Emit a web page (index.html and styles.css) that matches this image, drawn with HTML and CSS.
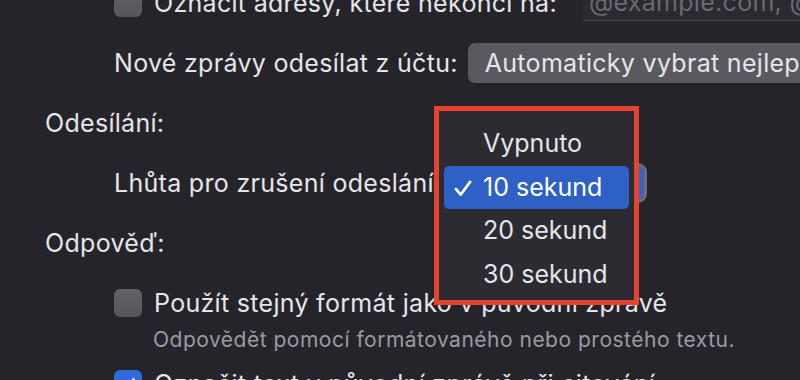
FILE: index.html
```html
<!DOCTYPE html>
<html lang="cs">
<head>
   <meta charset="UTF-8">
   <meta name="viewport" content="width=device-width, initial-scale=1.0">
   <title>Mail - Předvolby</title>
   <link rel="stylesheet" href="styles.css">
</head>
<body>
   <div class="prefs">
       <div class="pref-row indent">
           <span class="checkbox"></span>
           <span class="pref-label">Označit adresy, které nekončí na:</span>
           <div class="text-field">@example.com, @example.org</div>
       </div>

       <div class="pref-row indent">
           <span class="pref-label">Nové zprávy odesílat z účtu:</span>
           <div class="popup">Automaticky vybrat nejlepší účet</div>
       </div>

       <div class="pref-row section">Odesílání:</div>

       <div class="pref-row indent">
           <span class="pref-label">Lhůta pro zrušení odeslání:</span>
           <div class="popup popup-active">10 sekund</div>
       </div>

       <div class="pref-row section">Odpověď:</div>

       <div class="pref-row indent has-hint">
           <span class="checkbox"></span>
           <span class="pref-label">Použít stejný formát jako v původní zprávě</span>
       </div>
       <div class="pref-hint">Odpovědět pomocí formátovaného nebo prostého textu.</div>

       <div class="pref-row indent last">
           <span class="checkbox checked">
               <svg viewBox="0 0 20 20"><polyline points="4.5,10.5 8.5,14.5 15.5,5.5"/></svg>
           </span>
           <span class="pref-label">Označit text v původní zprávě při citování</span>
       </div>
   </div>

   <!-- otevřené menu, zvýrazněné červeným rámečkem -->
   <div class="callout">
       <ul class="menu">
           <li class="menu-item">Vypnuto</li>
           <li class="menu-item selected">
               <svg class="menu-check" viewBox="0 0 20 20"><polyline points="2.5,10.5 7.5,16.5 17.5,3"/></svg>
               10 sekund
           </li>
           <li class="menu-item">20 sekund</li>
           <li class="menu-item">30 sekund</li>
       </ul>
   </div>
</body>
</html>
```

FILE: styles.css
```css
:root {
    --window-bg: #26242b;
    --menu-bg: #2d2b32;
    --text: #e6e5e8;
    --text-muted: #9c9aa0;
    --placeholder: #6b6970;
    --control: #5b5960;
    --checkbox: #5c5a61;
    --accent: #2f60c6;
    --callout: #e3432f;
}

* {
    margin: 0;
    padding: 0;
    box-sizing: border-box;
}

body {
    width: 800px;
    height: 380px;
    overflow: hidden;
    position: relative;
    background: var(--window-bg);
    color: var(--text);
    font-family: 'Inter', 'Noto Sans', sans-serif;
    font-size: 25px;
    line-height: 30px;
}

.prefs {
    margin-top: -12px;
    padding-left: 45px;
    letter-spacing: 0.3px;
}

.pref-row {
    display: flex;
    align-items: center;
    height: 30px;
    margin-bottom: 30px;
    white-space: nowrap;
}

.pref-row.indent {
    padding-left: 69px;
}

.pref-row.has-hint,
.pref-row.last {
    margin-bottom: 0;
}

.checkbox {
    flex: none;
    width: 28px;
    height: 28px;
    margin-right: 12px;
    border-radius: 6px;
    background: linear-gradient(#646268, #57555c);
    display: flex;
    align-items: center;
    justify-content: center;
}

.checkbox.checked {
    background: #2f6ad8;
}

.checkbox svg {
    width: 20px;
    height: 20px;
    fill: none;
    stroke: #fff;
    stroke-width: 2.6;
    stroke-linecap: round;
    stroke-linejoin: round;
}

.text-field {
    flex: none;
    margin-left: 26px;
    height: 34px;
    margin-top: 1px;
    padding: 0 6px;
    width: 260px;
    overflow: hidden;
    background: #2c2a31;
    border-bottom: 1px solid #46444b;
    color: var(--placeholder);
    line-height: 30px;
}

.popup {
    flex: none;
    margin-left: 10px;
    height: 40px;
    padding: 0 17px;
    border-radius: 7px;
    background: var(--control);
    line-height: 40px;
}

.popup-active {
    margin-left: 6px;
    width: 200px;
    background: #3762c0;
    border: 3px solid #6f6d73;
    border-radius: 9px;
    line-height: 34px;
}

.pref-hint {
    margin: 9px 0 16px 108px;
    font-size: 21px;
    line-height: 26px;
    letter-spacing: 0.5px;
    color: var(--text-muted);
}

.callout {
    position: absolute;
    left: 434px;
    top: 106px;
    width: 205px;
    height: 199px;
    border: 5px solid var(--callout);
}

.menu {
    list-style: none;
    height: 100%;
    padding: 11px 5px;
    background: var(--menu-bg);
}

.menu-item {
    position: relative;
    height: 43.5px;
    line-height: 43.5px;
    padding-left: 39px;
    border-radius: 5px;
}

.menu-item.selected {
    background: var(--accent);
    color: #fff;
}

.menu-check {
    position: absolute;
    left: 9px;
    top: 13px;
    width: 20px;
    height: 19px;
    fill: none;
    stroke: #fff;
    stroke-width: 2.8;
    stroke-linecap: round;
    stroke-linejoin: round;
}
```
